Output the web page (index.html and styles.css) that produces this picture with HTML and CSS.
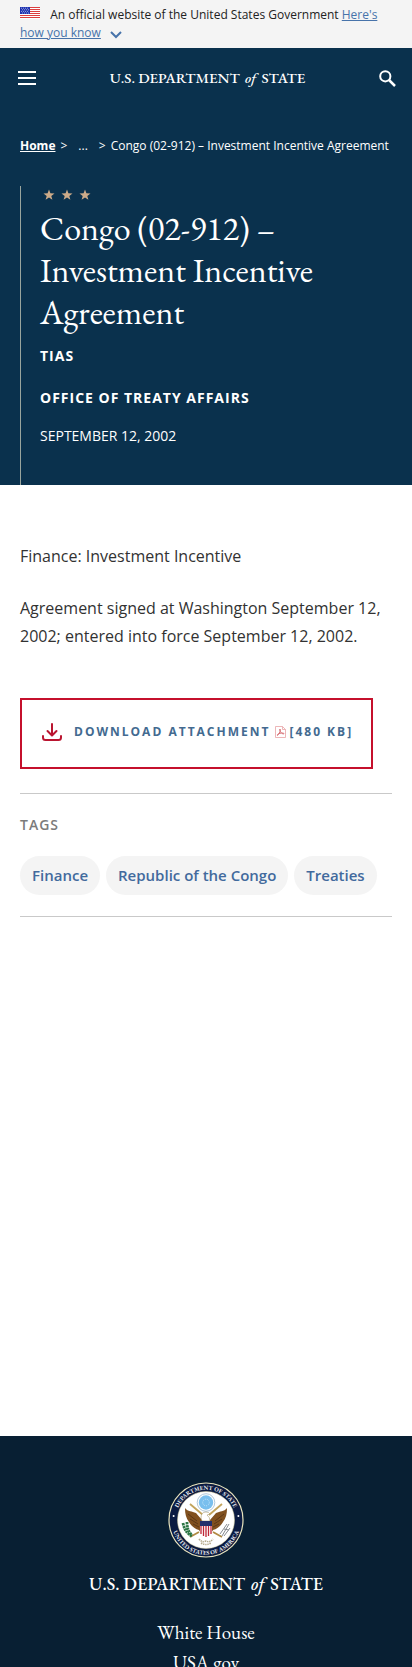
FILE: index.html
```html
<!DOCTYPE html>
<html lang="en">
<head>
<meta charset="utf-8">
<meta name="viewport" content="width=device-width, initial-scale=1">
<title>Congo (02-912) – Investment Incentive Agreement</title>
<link rel="stylesheet" href="styles.css">
</head>
<body>
<div class="gov-banner">
  <svg class="flag" viewBox="0 0 20 12" aria-hidden="true">
    <path fill="#fff" d="M0 0h20v12H0z"/>
    <path stroke="#db3e3e" d="M0 .5h20M0 2.5h20M0 4.5h20M0 6.5h20M0 8.5h20M0 10.5h20" stroke-width="1.1"/>
    <path fill="#1e33b1" d="M0 0h10v7H0z"/>
    <path stroke="#fff" stroke-width=".7" stroke-dasharray=".8 1.2" d="M1 1.2h8M2 2.8h7M1 4.4h8M2 6h7"/>
  </svg>
  <span>An official website of the United States Government</span>
  <a class="gov-link" href="#">Here's how you know</a>
  <svg class="chevron" viewBox="0 0 12 8" aria-hidden="true"><path d="M1 1l5 5 5-5" fill="none" stroke="#4773aa" stroke-width="2"/></svg>
</div>

<header class="site-header">
  <button class="icon-button" type="button" aria-label="Menu">
    <svg width="18" height="14" viewBox="0 0 18 14"><path d="M0 1h18M0 7h18M0 13h18" stroke="#fff" stroke-width="2"/></svg>
  </button>
  <a class="wordmark" href="#">U.S. DEPARTMENT <em>of</em> STATE</a>
  <button class="icon-button" type="button" aria-label="Search">
    <svg width="17" height="17" viewBox="0 0 17 17"><circle cx="6.3" cy="6.3" r="5.1" fill="none" stroke="#fff" stroke-width="2"/><path d="M10 10l6 6" stroke="#fff" stroke-width="2.5"/></svg>
  </button>
</header>

<div class="hero">
  <nav class="breadcrumb" aria-label="Breadcrumb">
    <a href="#">Home</a><span class="sep">&gt;</span><span class="dots">...</span><span class="sep">&gt;</span><span>Congo (02-912) – Investment Incentive Agreement</span>
  </nav>
  <div class="hero-body">
    <svg class="stars" viewBox="0 0 48 12" fill="#cdab89" aria-hidden="true">
      <path id="star" d="M6 .5l1.4 3.8 4.1.1-3.2 2.5 1.1 3.9L6 8.5l-3.4 2.3 1.1-3.9L.5 4.4l4.1-.1z"/>
      <use href="#star" x="18"/><use href="#star" x="36"/>
    </svg>
    <h1 class="title">Congo (02-912) – Investment Incentive Agreement</h1>
    <p class="kicker">TIAS</p>
    <p class="kicker office">Office of Treaty Affairs</p>
    <p class="date">September 12, 2002</p>
  </div>
</div>

<main class="content">
  <p>Finance: Investment Incentive</p>
  <p>Agreement signed at Washington September 12, 2002; entered into force September 12, 2002.</p>
  <a class="download" href="#">
    <svg class="download-icon" viewBox="0 0 20 18" fill="none" stroke="#ba1530" stroke-width="2" stroke-linecap="round" stroke-linejoin="round" aria-hidden="true"><path d="M10 1v11M5.5 8l4.5 4.5L14.5 8M1 13v1.500Q1 17 3.500 17h13q2.500 0 2.500-2.500V13"/></svg>
    <span>Download Attachment</span>
    <svg class="pdf-icon" viewBox="0 0 11 12" fill="none" stroke="#e9a3a6" aria-hidden="true"><path stroke-width=".8" d="M.5.5h7l3 3v8H.5zM7.500.5v3h3"/><path stroke="#d4666c" stroke-width=".9" d="M5 3c1 1-.2 4-2.500 6.500-.8-.6.5-1.800 2.500-2.200s4-.4 4 .3-2 .3-3.200-1.300S4.500 3.500 5 3z"/></svg>
    <span>[480 KB]</span>
  </a>
  <section class="tags">
    <h2>Tags</h2>
    <div class="tag-list"><a href="#">Finance</a><a href="#">Republic of the Congo</a><a href="#">Treaties</a></div>
  </section>
</main>

<footer class="site-footer">
  <svg class="seal" viewBox="0 0 76 76" role="img" aria-label="Department of State seal">
    <defs>
      <path id="arc-top" d="M8.300 44A30.300 30.300 0 1 1 67.700 44"/>
      <path id="arc-bottom" d="M3.200 38A34.800 34.800 0 0 0 72.800 38"/>
    </defs>
    <circle cx="38" cy="38" r="37" fill="#0b1b42" stroke="#e9e4bd" stroke-width="1.200"/>
    <circle cx="38" cy="38" r="28.500" fill="#fff" stroke="#d7cf9d" stroke-width=".5"/>
    <text class="seal-text"><textPath href="#arc-top" startOffset="50%">DEPARTMENT OF STATE</textPath></text>
    <text class="seal-text"><textPath href="#arc-bottom" startOffset="50%">UNITED STATES OF AMERICA</textPath></text>
    <circle cx="5.600" cy="34" r="1" fill="#fff"/><circle cx="70.400" cy="34" r="1" fill="#fff"/>
    <circle cx="38" cy="20.500" r="8.800" fill="#fff" stroke="#9ab9cf" stroke-width=".8"/>
    <circle cx="38" cy="20.500" r="7.200" fill="#79bfee"/>
    <circle cx="38" cy="20.500" r="3.300" fill="none" stroke="#c7e6fa" stroke-dasharray="1 1"/>
    <path d="M22 22l13 11M54 22l-13 11" stroke="#c3a45c" stroke-width="1.800"/>
    <path fill="#80501f" d="M17 26c3 4 7 3 11 5l6 7h8l6-7c4-2 8-1 11-5 0 6-1 10-4 14-2 4-6 7-10 8l-3 5h-8l-3-5c-4-1-8-4-10-8-3-4-4-8-4-14z"/>
    <path fill="none" stroke="#4b2c14" stroke-width=".7" d="M20 32l9 7M22 37l8 5M25 42l6 3M56 32l-9 7M54 37l-8 5M51 42l-6 3"/>
    <path fill="#fff" stroke="#9b8a54" stroke-width=".5" d="M33 36q0-6 5-6 3 0 4 2l-3 1q3 2 3 6h-8z"/>
    <path fill="#23306b" d="M32 39h12v5H32z"/>
    <path fill="#fff" d="M32 44h12v6q-1 5-6 6-5-1-6-6z"/>
    <path stroke="#bf2738" stroke-width="1.300" d="M33 44v8M35.500 44v10M38 44v11M40.500 44v10M43 44v8"/>
    <path stroke="#b18a43" stroke-width="1.800" fill="none" d="M31 50l-9 5M45 50l9 5"/>
    <path stroke="#2d7645" stroke-width="2.800" stroke-dasharray="2.200 .6" fill="none" d="M15 41q2 10 9 13M19 40q0 9 5 13"/>
    <path stroke="#868b91" fill="none" stroke-width="1" d="M54 54l7-12M52 52l7-10M56 54l6-8M56 47l5 1"/>
    <path fill="none" stroke="#b4a98b" stroke-width="1.500" stroke-dasharray="1.400 .8" d="M31 57q3 4 7 2 4 2 7-2M33 61q5 3 10 0"/>
  </svg>
  <a class="footer-wordmark" href="#">U.S. DEPARTMENT <em>of</em> STATE</a>
  <nav class="footer-links" aria-label="Footer"><a href="#">White House</a><a href="#">USA.gov</a></nav>
</footer>
</body>
</html>
```
FILE: styles.css
```css
* { box-sizing: border-box; }

body {
  margin: 0;
  height: 100vh;
  overflow: hidden;
  background: #fff;
  color: #323232;
  font-family: "Open Sans", "Noto Sans", sans-serif;
}

p, h1, h2 { margin: 0; }
a { color: inherit; text-decoration: none; }
button { padding: 0; border: 0; background: none; font: inherit; cursor: pointer; }
svg { display: block; }

.gov-banner {
  padding: 6px 20px;
  background: #f4f4f4;
  color: #222;
  font-size: 12px;
  line-height: 18px;
}
.flag { display: inline-block; width: 20px; height: 12px; margin-right: 7px; vertical-align: 0; }
.gov-link { color: #4773aa; text-decoration: underline; }
.chevron { display: inline-block; width: 12px; height: 8px; margin-left: 6px; vertical-align: -2px; }

.site-header {
  display: flex;
  align-items: center;
  justify-content: space-between;
  height: 60px;
  padding: 0 14px 0 16px;
  background: #0a314d;
}
.icon-button { display: flex; padding: 2px; }
.wordmark {
  color: #fff;
  font: 500 15px/20px "EB Garamond", "Liberation Serif", serif;
}
.wordmark em { margin: 0 2px; }

.hero { padding: 29px 20px 0; background: #0a314d; color: #fff; }
.breadcrumb { display: flex; font-size: 12px; line-height: 18px; white-space: nowrap; }
.breadcrumb a { font-weight: 700; text-decoration: underline; }
.sep { margin: 0 5px; }
.dots { margin: 0 6px; }
.hero-body {
  margin-top: 31px;
  padding: 3px 20px 39px 19px;
  border-left: 1px solid #9aa59e;
}
.stars { width: 48px; height: 12px; margin-left: 3px; }
.title { margin-top: 6px; font: 400 34px/42px "EB Garamond", "Liberation Serif", serif; }
.kicker { margin-top: 13px; font-size: 14px; font-weight: 700; line-height: 20px; letter-spacing: 1px; text-transform: uppercase; }
.office { margin-top: 22px; }
.date { margin-top: 18px; font-size: 14px; line-height: 20px; text-transform: uppercase; }

.content { padding: 57px 20px 519px; font-size: 16px; line-height: 28px; }
.content p { margin: 0 0 24px; }
.download {
  display: inline-flex;
  align-items: center;
  margin-top: 24px;
  padding: 16px 18px 19px 20px;
  border: 2px solid #c5102c;
  color: #436a90;
  font-size: 12px;
  font-weight: 700;
  line-height: 32px;
  letter-spacing: 2px;
  text-transform: uppercase;
  white-space: nowrap;
}
.download-icon { width: 20px; height: 18px; margin-right: 12px; }
.pdf-icon { width: 11px; height: 12px; margin: 0 3px 0 5px; }
.tags { margin-top: 24px; padding: 21px 0; border: solid #c9c9c9; border-width: 1px 0; }
.tags h2 { color: #7b7b7b; font-size: 14px; font-weight: 600; line-height: 20px; letter-spacing: 1px; text-transform: uppercase; }
.tag-list { display: flex; flex-wrap: wrap; gap: 6px; margin-top: 21px; }
.tag-list a {
  padding: 9px 12px 10px;
  border-radius: 20px;
  background: #f4f4f4;
  color: #426a9d;
  font-size: 15px;
  font-weight: 600;
  line-height: 20px;
}

.site-footer {
  display: flex;
  flex-direction: column;
  align-items: center;
  padding: 46px 20px;
  background: #081f33;
  color: #fff;
  font-family: "EB Garamond", "Liberation Serif", serif;
  font-size: 18px;
  line-height: 30px;
}
.seal { width: 76px; height: 76px; }
.seal-text { fill: #e8e9ee; font: 700 6px "EB Garamond", "Liberation Serif", serif; text-anchor: middle; }
.footer-wordmark { margin-top: 11px; font-weight: 500; }
.footer-wordmark em { margin: 0 2px; }
.footer-links { display: flex; flex-direction: column; align-items: center; margin-top: 19px; font-size: 19px; }
```
